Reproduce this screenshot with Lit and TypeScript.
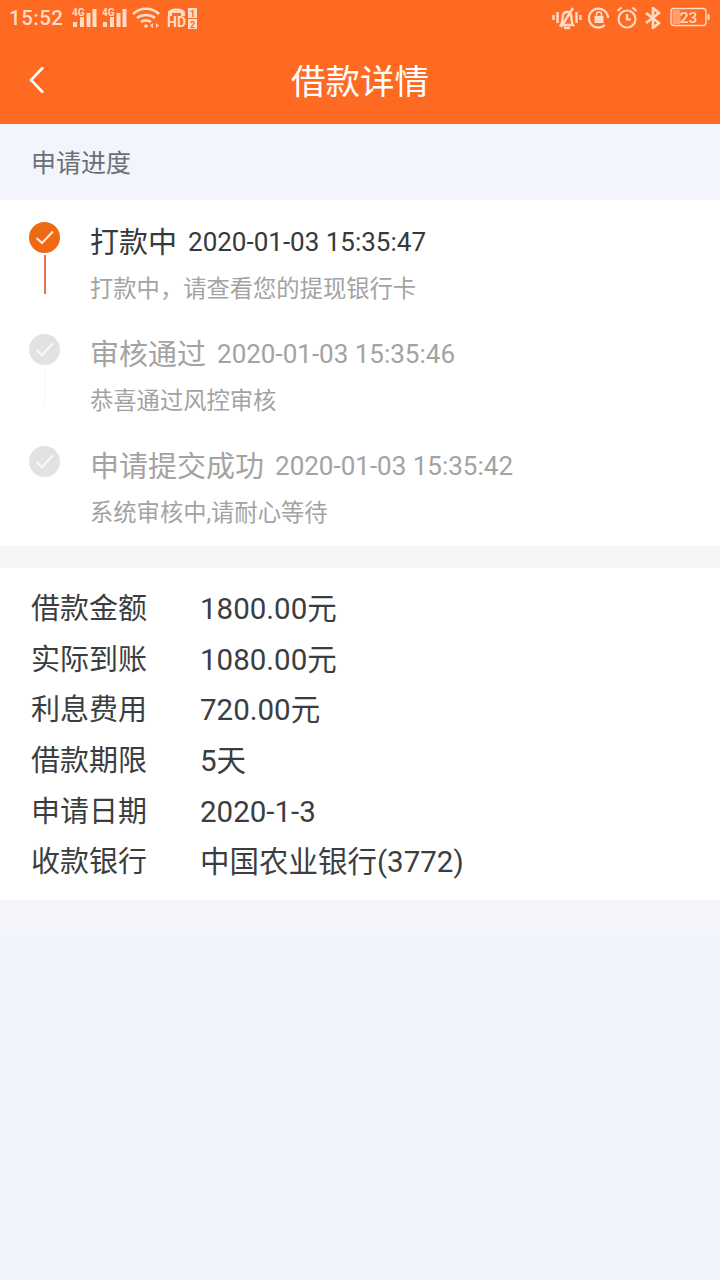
import { LitElement, html, css, svg } from 'lit';
import { customElement } from 'lit/decorators.js';

const steps = [
  { title: '打款中', time: '2020-01-03 15:35:47', desc: '打款中，请查看您的提现银行卡', active: true },
  { title: '审核通过', time: '2020-01-03 15:35:46', desc: '恭喜通过风控审核', active: false },
  { title: '申请提交成功', time: '2020-01-03 15:35:42', desc: '系统审核中,请耐心等待', active: false },
];

const details = [
  ['借款金额', '1800.00元'],
  ['实际到账', '1080.00元'],
  ['利息费用', '720.00元'],
  ['借款期限', '5天'],
  ['申请日期', '2020-1-3'],
  ['收款银行', '中国农业银行(3772)'],
];

const signal = svg`
  <svg class="ic" width="28" height="22" viewBox="0 0 28 22" fill="#ffdcc6">
    <text x="0" y="9" font-size="10" font-weight="700" font-family="Roboto, sans-serif">4G</text>
    <rect x="1" y="15" width="4" height="5"/>
    <rect x="8" y="10" width="4" height="10"/>
    <rect x="14.500" y="6" width="4" height="14"/>
    <rect x="20.500" y="2" width="4" height="18"/>
  </svg>`;

@customElement('app-root')
export class AppRoot extends LitElement {
  static styles = css`
    :host {
      display: block;
      width: 720px;
      height: 1280px;
      background: #f1f4fd;
      font-family: Roboto, 'Noto Sans CJK SC', sans-serif;
      overflow: hidden;
    }
    .top {
      height: 124px;
      background: #ff6a22;
      display: flex;
      flex-direction: column;
    }
    .status {
      height: 36px;
      padding: 0 10px 0 9px;
      display: flex;
      align-items: center;
      color: #ffdcc6;
    }
    .clock {
      font-size: 20.500px;
      font-weight: 500;
      letter-spacing: 0.500px;
      margin-right: 8px;
    }
    .left,
    .right {
      display: flex;
      align-items: center;
    }
    .left {
      gap: 2px;
    }
    .right {
      margin-left: auto;
      gap: 6px;
    }
    .ic {
      display: block;
    }
    .hd {
      margin-left: 3px;
    }
    .bt {
      margin-left: 1px;
    }
    .battery {
      margin: -3px 0 0 3px;
    }
    .nav {
      flex: 1;
      position: relative;
      display: flex;
      align-items: center;
      justify-content: center;
      padding-top: 4px;
    }
    .back {
      position: absolute;
      left: 28px;
      top: 29px;
    }
    .nav h1 {
      margin: 0;
      color: #fff;
      font-size: 34.500px;
      font-weight: 400;
      line-height: 1;
    }
    .head {
      height: 74px;
      padding-left: 31px;
      display: flex;
      align-items: center;
      font-size: 25px;
      color: #6b7075;
      background: #f2f5fb;
      border-bottom: 2px solid #f6f7f9;
    }
    .steps {
      height: 346px;
      background: #fff;
      display: flex;
      flex-direction: column;
    }
    .step {
      height: 112px;
      padding-left: 29px;
      display: flex;
      box-sizing: border-box;
    }
    .rail {
      width: 31px;
      margin-right: 30px;
      padding-top: 22px;
      display: flex;
      flex-direction: column;
      align-items: center;
    }
    .line {
      width: 2px;
      height: 39px;
      margin-top: 2px;
      background: #fbfbfb;
    }
    .active .line {
      background: #ea7350;
    }
    .body {
      padding-top: 19px;
    }
    .row1 {
      display: flex;
      align-items: center;
      height: 42px;
      gap: 11px;
      color: #a3a3a3;
    }
    .name {
      font-size: 29px;
    }
    .time {
      font-size: 26px;
      margin-top: 4px;
    }
    .active .row1 {
      color: #36393b;
    }
    .desc {
      margin-top: 12px;
      font-size: 23.300px;
      line-height: 32px;
      color: #a3a3a3;
    }
    .gap {
      height: 22px;
      background: #f5f5f7;
    }
    .info {
      height: 332px;
      padding: 16px 0 0 31px;
      box-sizing: border-box;
      background: #fff;
      display: grid;
      grid-template-columns: 169px 1fr;
      grid-auto-rows: 50.700px;
      align-items: baseline;
      line-height: 50.700px;
      font-size: 29px;
      color: #3b3e40;
    }
    .val {
      font-size: 29.500px;
    }
    .fade {
      height: 38px;
      background: #f4f6fb;
    }
  `;

  check(active: boolean) {
    const fill = active ? '#ed6a12' : '#e2e2e2';
    const stroke = active ? '#ffe6d2' : '#f8f8f8';
    return html`<svg class="ic" width="31" height="31" viewBox="0 0 31 31">
      <circle cx="15.500" cy="15.500" r="15.500" fill=${fill}></circle>
      <path d="M7.500 16l5.500 5 11-11.500" fill="none" stroke=${stroke} stroke-width="2.200"></path>
    </svg>`;
  }

  render() {
    return html`
      <div class="top">
        <div class="status">
          <span class="clock">15:52</span>
          <div class="left">
            ${signal} ${signal}
            <svg class="ic" width="30" height="24" viewBox="0 0 30 24" fill="none" stroke="#ffdcc6" stroke-width="2.600">
              <path d="M1 8c7-7 19-7 26 0M5 12c5-4 13-4 18 0M9 16c3-2 7-2 10 0"/>
              <circle cx="14" cy="20" r="1.800" fill="#ffdcc6" stroke="none"/>
              <path d="M21 17l-3 2.500 3 2.500zM24 17l3 2.500-3 2.500z" fill="#ffdcc6" stroke="none"/>
            </svg>
            <svg class="ic hd" width="30" height="24" viewBox="0 0 30 24">
              <path d="M1 10V7c0-6 17-6 17 0v3h-4V7H5v3z" fill="#ffdcc6"/>
              <text x="0" y="21" font-size="14" font-weight="700" fill="#ffdcc6" font-family="Roboto, sans-serif">HD</text>
              <rect x="21" y="2" width="9" height="10" fill="#ffdcc6"/>
              <rect x="21" y="13" width="9" height="10" fill="#ffdcc6"/>
              <text x="23" y="11" font-size="9" font-weight="700" fill="#ff6a22" font-family="Roboto, sans-serif">1</text>
              <text x="23" y="22" font-size="9" font-weight="700" fill="#ff6a22" font-family="Roboto, sans-serif">2</text>
            </svg>
          </div>
          <div class="right">
            <svg class="ic" width="30" height="24" viewBox="0 0 30 24" fill="none" stroke="#ffdcc6" stroke-width="2.400">
              <path d="M1.500 9v5M5.500 6v11M24.500 6v11M28.500 9v5"/>
              <path d="M9 19c2-3 1-7 2-10 1-4 7-4 8 0 1 3 0 7 2 10zM12 22h6M9 21L21 2"/>
            </svg>
            <svg class="ic" width="22" height="22" viewBox="0 0 22 22" fill="none" stroke="#ffdcc6" stroke-width="2.200">
              <path d="M17 18a9.500 9.500 0 1 1 3-7"/>
              <rect x="6.500" y="9" width="9" height="7" fill="#ffdcc6" stroke="none"/>
              <path d="M8.500 9V7.500a2.500 2.500 0 0 1 5 0V9" stroke-width="1.500"/>
            </svg>
            <svg class="ic" width="22" height="24" viewBox="0 0 22 24" fill="none" stroke="#ffdcc6" stroke-width="2.200">
              <circle cx="11" cy="13" r="8.500"/>
              <path d="M11 8v5.500h4M1.500 5l4-3.500M20.500 5l-4-3.500"/>
            </svg>
            <svg class="ic bt" width="16" height="22" viewBox="0 0 16 22" fill="none" stroke="#ffdcc6" stroke-width="2.600">
              <path d="M1 6l13 10-6 5V1l6 5L1 16"/>
            </svg>
            <svg class="ic battery" width="40" height="20" viewBox="0 0 40 20">
              <rect x="1" y="1.500" width="35" height="17" rx="3" fill="none" stroke="#ffdcc6" stroke-width="1.400"/>
              <rect x="2.500" y="3" width="8" height="14" rx="1.500" fill="#ffa06e"/>
              <rect x="37.500" y="7" width="2" height="6" rx="1" fill="#ffdcc6"/>
              <text x="18.500" y="15.500" text-anchor="middle" font-size="15.500" font-weight="500" fill="#ffdcc6" font-family="Roboto, sans-serif">23</text>
            </svg>
          </div>
        </div>
        <div class="nav">
          <svg class="back" width="20" height="30" viewBox="0 0 20 30" fill="none" stroke="#fff" stroke-width="2.600">
            <path d="M15 2.500L3 15l12 12.500"/>
          </svg>
          <h1>借款详情</h1>
        </div>
      </div>

      <div class="head">申请进度</div>

      <div class="steps">
        ${steps.map(
          (s, i) => html`
            <div class="step ${s.active ? 'active' : ''}">
              <div class="rail">
                ${this.check(s.active)}
                ${i < steps.length - 1 ? html`<div class="line"></div>` : ''}
              </div>
              <div class="body">
                <div class="row1">
                  <span class="name">${s.title}</span>
                  <span class="time">${s.time}</span>
                </div>
                <div class="desc">${s.desc}</div>
              </div>
            </div>
          `,
        )}
      </div>

      <div class="gap"></div>

      <div class="info">
        ${details.map(([k, v]) => html`<span>${k}</span><span class="val">${v}</span>`)}
      </div>

      <div class="fade"></div>
    `;
  }
}

declare global {
  interface HTMLElementTagNameMap {
    'app-root': AppRoot;
  }
}
